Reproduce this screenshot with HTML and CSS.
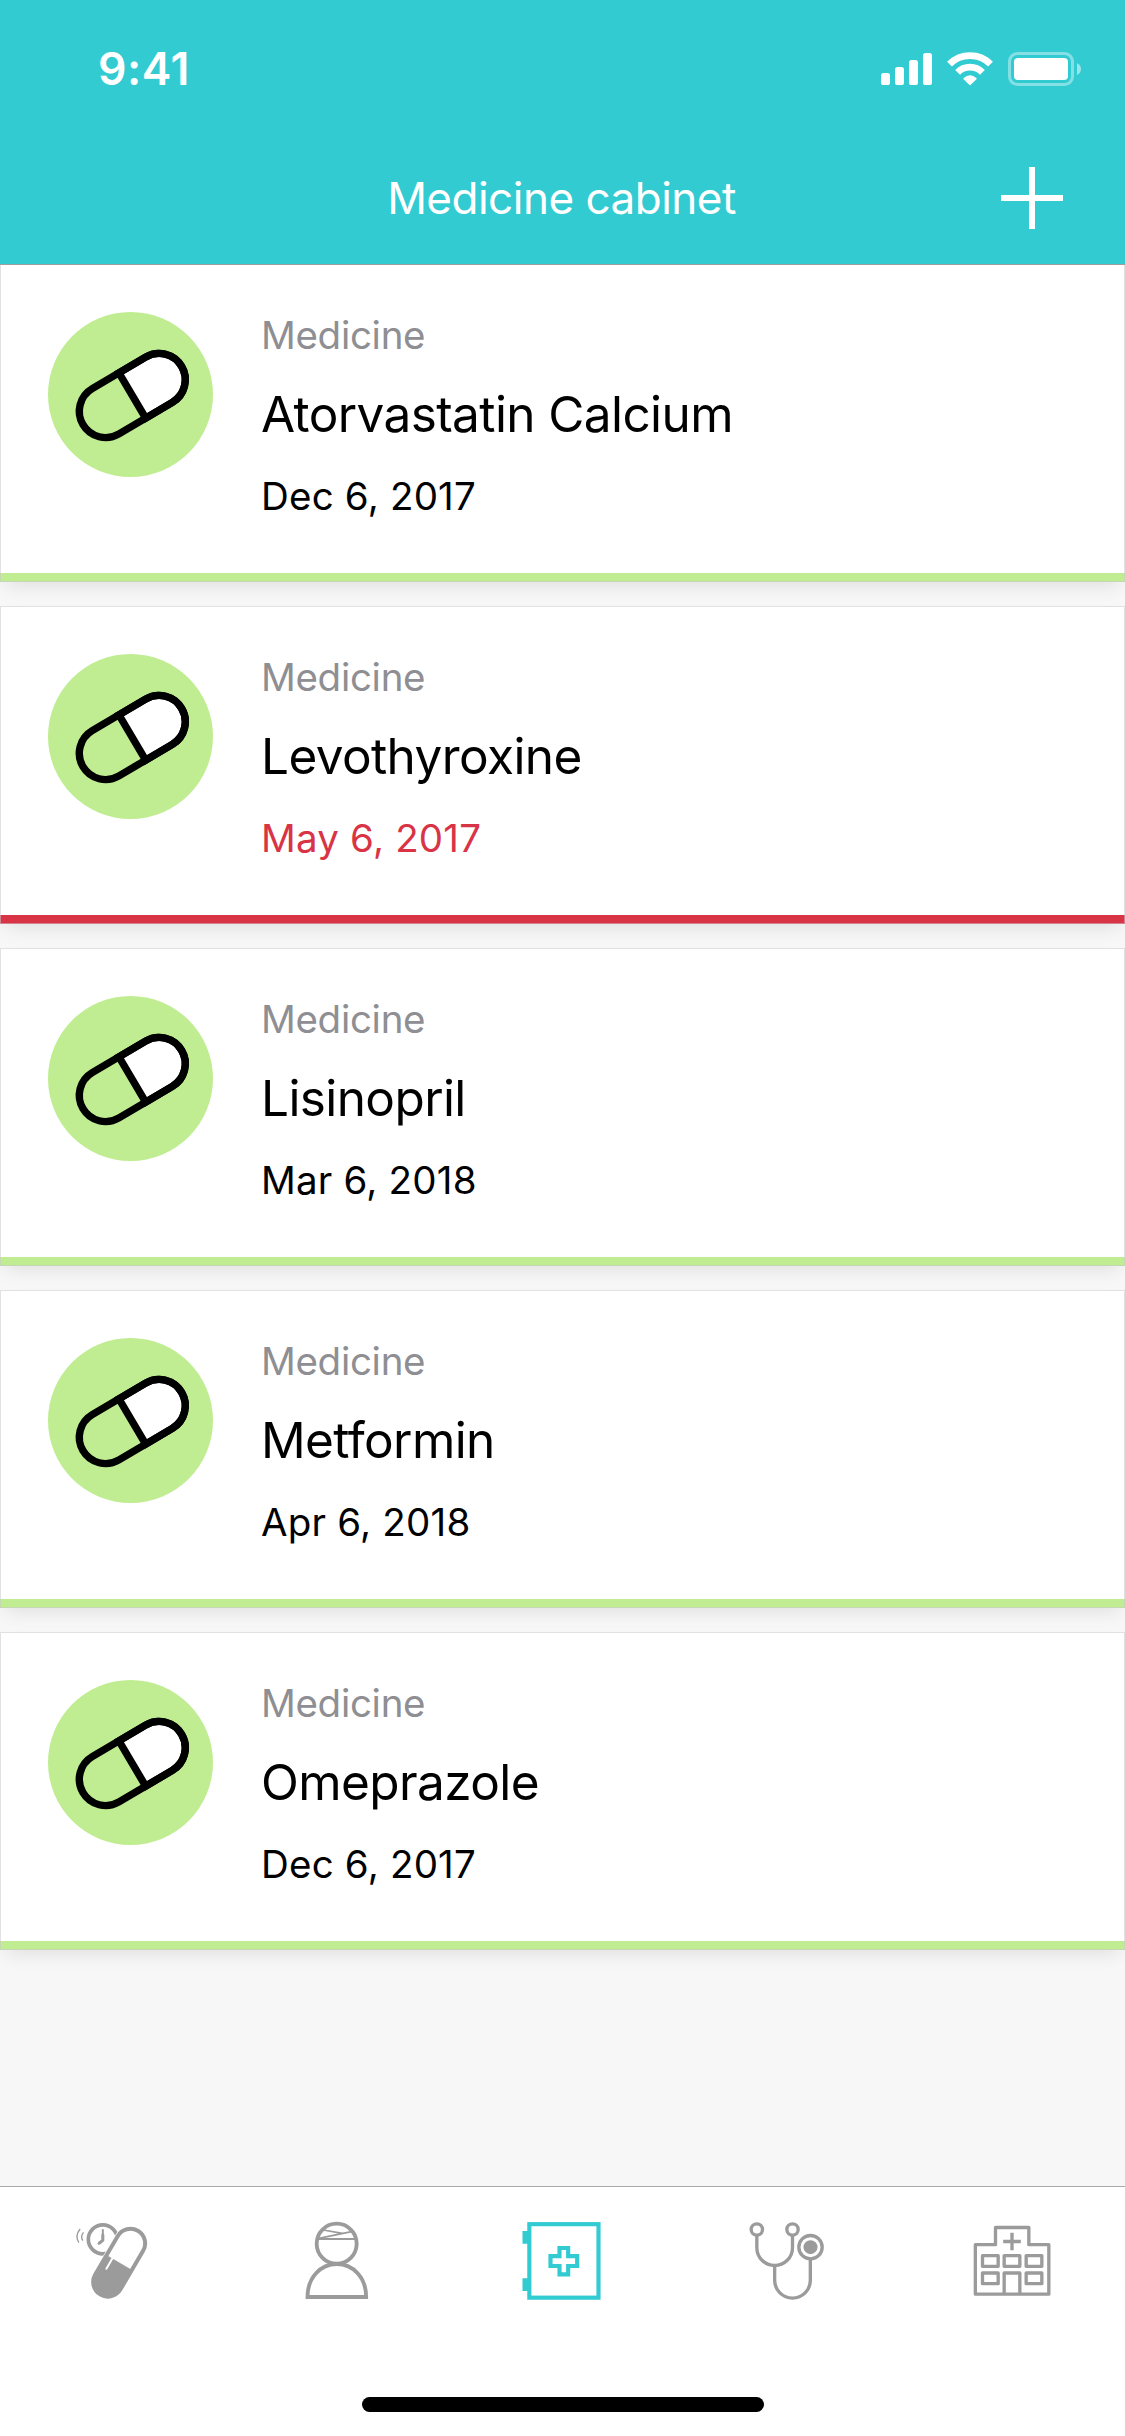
FILE: index.html
```html
<!DOCTYPE html>
<html lang="en">
<head>
<meta charset="utf-8">
<title>Medicine cabinet</title>
<link rel="stylesheet" href="styles.css">
</head>
<body>
<svg class="defs" aria-hidden="true">
  <symbol id="pill" viewBox="0 0 165 165">
    <g transform="translate(84.3 83.5) rotate(-30.6)" stroke="#000" stroke-width="7.4">
      <path d="M0-26.3H31A26.3 26.3 0 0 1 31 26.3H0Z" fill="#fff"/>
      <rect x="-57.3" y="-26.3" width="114.6" height="52.6" rx="26.3" fill="none"/>
    </g>
  </symbol>
</svg>
<div class="screen">
  <header class="header">
    <div class="status">
      <span class="status__time">9:41</span>
      <div class="status__icons">
        <svg width="51" height="34" viewBox="0 0 51 34" fill="#fff">
          <rect x="0" y="21" width="9" height="12" rx="2.6"/>
          <rect x="14" y="15" width="9" height="18" rx="2.6"/>
          <rect x="28" y="8" width="9" height="25" rx="2.6"/>
          <rect x="42" y="1" width="9" height="32" rx="2.6"/>
        </svg>
        <svg width="46" height="34" viewBox="0 0 46 34">
          <g fill="none" stroke="#fff" stroke-width="6.8">
            <path d="M2.5 12.1A29 29 0 0 1 43.5 12.1"/>
            <path d="M10.6 20.3A17.3 17.3 0 0 1 35.4 20.3"/>
          </g>
          <path d="M16.5 27.2Q15.9 26.5 16.7 25.9Q23 20.4 29.3 25.9Q30.1 26.5 29.5 27.2L23.5 33.1Q23 33.6 22.5 33.1Z" fill="#fff"/>
        </svg>
        <svg width="73" height="34" viewBox="0 0 73 34">
          <rect x="1.5" y="1.5" width="63" height="31" rx="8" fill="none" stroke="#fff" stroke-opacity=".4" stroke-width="3"/>
          <rect x="6" y="6" width="54" height="22" rx="4" fill="#fff"/>
          <path d="M69 11Q73 13 73 17T69 23Z" fill="#fff" fill-opacity=".5"/>
        </svg>
      </div>
    </div>
    <div class="nav">
      <h1 class="nav__title">Medicine cabinet</h1>
      <svg class="nav__add" width="62" height="62" viewBox="0 0 62 62"><path d="M31 0V62M0 31H62" stroke="#fff" stroke-width="6"/></svg>
    </div>
  </header>

  <main class="list">
    <article class="card">
      <svg class="card__icon"><use href="#pill"/></svg>
      <div class="card__text">
        <p class="card__kind">Medicine</p>
        <h2 class="card__name">Atorvastatin Calcium</h2>
        <p class="card__date">Dec 6, 2017</p>
      </div>
    </article>
    <article class="card card--expired">
      <svg class="card__icon"><use href="#pill"/></svg>
      <div class="card__text">
        <p class="card__kind">Medicine</p>
        <h2 class="card__name">Levothyroxine</h2>
        <p class="card__date">May 6, 2017</p>
      </div>
    </article>
    <article class="card">
      <svg class="card__icon"><use href="#pill"/></svg>
      <div class="card__text">
        <p class="card__kind">Medicine</p>
        <h2 class="card__name">Lisinopril</h2>
        <p class="card__date">Mar 6, 2018</p>
      </div>
    </article>
    <article class="card">
      <svg class="card__icon"><use href="#pill"/></svg>
      <div class="card__text">
        <p class="card__kind">Medicine</p>
        <h2 class="card__name">Metformin</h2>
        <p class="card__date">Apr 6, 2018</p>
      </div>
    </article>
    <article class="card">
      <svg class="card__icon"><use href="#pill"/></svg>
      <div class="card__text">
        <p class="card__kind">Medicine</p>
        <h2 class="card__name">Omeprazole</h2>
        <p class="card__date">Dec 6, 2017</p>
      </div>
    </article>
  </main>

  <footer class="footer">
    <nav class="tabs">
      <a class="tab">
        <svg class="tab__icon" viewBox="22.5 108 270 270">
          <circle cx="127" cy="178" r="43.5" stroke-width="11"/>
          <path d="M127 150V180L114 191" stroke-width="6" stroke-linecap="round" stroke-linejoin="round"/>
          <path d="M127 165V181L117 189" stroke-width="9" stroke-linecap="round" stroke-linejoin="round"/>
          <path d="M59 147Q42 167 55 188M69 157Q59 169 67 182" stroke-width="4"/>
          <g transform="translate(176 248) rotate(30.4)">
            <rect x="-52" y="-119" width="104" height="238" rx="52" fill="#fff" stroke="none"/>
            <rect x="-44" y="-111" width="88" height="222" rx="44" stroke-width="12"/>
            <path d="M-44 0H44V67A44 44 0 0 1-44 67Z" fill="currentColor"/>
            <path d="M-24-4V35" stroke="#fff" stroke-width="6" stroke-linecap="round"/>
          </g>
        </svg>
      </a>
      <a class="tab">
        <svg class="tab__icon" viewBox="697.5 108 270 270">
          <g stroke-width="11.5">
            <circle cx="828.5" cy="191" r="60"/>
            <path d="M741 351C741 293 780 252 829 252S917 293 917 351Z"/>
          </g>
          <path d="M772 177H886" stroke-width="6"/>
          <path d="M775 175L873 155M788 150L846 160" stroke-width="5"/>
        </svg>
      </a>
      <a class="tab tab--active">
        <svg class="tab__icon" viewBox="52.5 108 270 270">
          <g stroke-width="12.5">
            <rect x="86.5" y="132.5" width="207.5" height="220.5"/>
            <path d="M177 204H203V228.500H230V258H203V283H177V258H150V228.500H177Z"/>
          </g>
          <path d="M66 153H84V191H66ZM66 295H84V333H66Z" fill="currentColor" stroke="none"/>
        </svg>
      </a>
      <a class="tab">
        <svg class="tab__icon" viewBox="727.5 108 270 270">
          <g stroke-width="10">
            <circle cx="769" cy="148.500" r="17"/>
            <circle cx="876" cy="148.500" r="17"/>
            <path d="M769 168V203A53.500 53.500 0 0 0 876 203V168"/>
            <path d="M822.500 257V301A53.500 53.500 0 0 0 929.500 301V238"/>
            <circle cx="930" cy="201.500" r="35"/>
          </g>
          <circle cx="930" cy="201.500" r="21" fill="currentColor" stroke="none"/>
        </svg>
      </a>
      <a class="tab">
        <svg class="tab__icon" viewBox="82.5 108 270 270">
          <g stroke-width="10" stroke-linejoin="round">
            <path d="M104.500 342.500V194H165V142.500H265V194H325V342.500Z"/>
            <path d="M214.500 158V211M188 184.500H241"/>
            <rect x="126" y="227" width="47" height="32"/>
            <rect x="191" y="227" width="47" height="32"/>
            <rect x="257" y="227" width="47" height="32"/>
            <rect x="126" y="279" width="47" height="32"/>
            <rect x="257" y="279" width="47" height="32"/>
            <path d="M191 342V279H238V342"/>
          </g>
        </svg>
      </a>
    </nav>
    <div class="home-indicator"></div>
  </footer>
</div>
</body>
</html>
```
FILE: styles.css
```css
* {
  box-sizing: border-box;
  margin: 0;
}

body {
  font-family: Inter, "Liberation Sans", sans-serif;
  font-weight: 400;
  color: #000;
}

.defs {
  display: none;
}

.screen {
  display: flex;
  flex-direction: column;
  width: 1125px;
  height: 2436px;
  background: #f7f7f7;
  overflow: hidden;
}

/* Header */

.header {
  position: relative;
  z-index: 1;
  height: 265px;
  flex: none;
  background: #33cbd2;
  border-bottom: 1px solid #9b9fa0;
  color: #fff;
}

.status {
  display: flex;
  justify-content: space-between;
  align-items: flex-start;
  height: 132px;
  padding: 44px 44px 0 98px;
}

.status__time {
  font-size: 44.5px;
  line-height: 50px;
  font-weight: 600;
  letter-spacing: 0.5px;
}

.status__icons {
  display: flex;
  gap: 15px;
  padding-top: 8px;
}

.nav {
  display: grid;
  grid-template-columns: 1fr auto 1fr;
  align-items: center;
  height: 132px;
  padding: 0 62px;
}

.nav__title {
  grid-column: 2;
  padding-right: 2px;
  font-size: 44px;
  line-height: 54px;
  font-weight: 400;
  letter-spacing: -0.5px;
}

.nav__add {
  justify-self: end;
}

/* Medicine list */

.list {
  display: flex;
  flex-direction: column;
  flex: 1;
  gap: 24px;
  margin-top: -1px;
}

.card {
  --status: #c0ed91;
  display: flex;
  align-items: flex-start;
  gap: 48px;
  height: 318px;
  flex: none;
  padding: 47px;
  border: 1px solid rgba(200, 199, 204, 0.55);
  background: linear-gradient(var(--status), var(--status)) bottom / 100% 9px no-repeat border-box, #fff;
  box-shadow: 0 9px 18px -6px rgba(0, 0, 0, 0.1);
}

.card--expired {
  --status: #d83446;
}

.card__icon {
  width: 165px;
  height: 165px;
  flex: none;
  border-radius: 50%;
  background: #c0ed91;
}

.card__kind,
.card__date {
  font-size: 38.5px;
  line-height: 46px;
}

.card__kind {
  color: #8e8e93;
  letter-spacing: -0.3px;
}

.card__name {
  margin: 26px 0 29px;
  font-size: 49.5px;
  line-height: 60px;
  font-weight: 400;
  letter-spacing: -0.6px;
}

.card__date {
  letter-spacing: 0.2px;
}

.card--expired .card__date {
  color: var(--status);
}

/* Tab bar */

.footer {
  display: flex;
  flex-direction: column;
  align-items: center;
  justify-content: space-between;
  height: 250px;
  flex: none;
  padding: 29px 0 24px;
  border-top: 1px solid #a8a8aa;
  background: #fff;
}

.tabs {
  display: grid;
  grid-template-columns: repeat(5, 225px);
  justify-items: center;
}

.tab {
  color: #9b9b9b;
}

.tab--active {
  color: #33cbd2;
}

.tab__icon {
  display: block;
  width: 90px;
  height: 90px;
  fill: none;
  stroke: currentColor;
}

.home-indicator {
  width: 402px;
  height: 15px;
  border-radius: 7.5px;
  background: #000;
}
```
